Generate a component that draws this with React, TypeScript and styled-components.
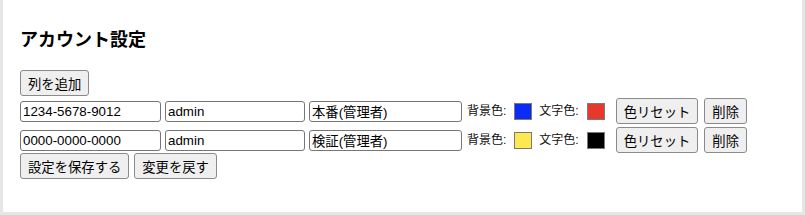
import React from "react";
import styled, { createGlobalStyle } from "styled-components";

type Account = {
  id: string;
  user: string;
  name: string;
  bg: string;
  fg: string;
};

const accounts: Account[] = [
  { id: "1234-5678-9012", user: "admin", name: "本番(管理者)", bg: "#0a2cf5", fg: "#e8382b" },
  { id: "0000-0000-0000", user: "admin", name: "検証(管理者)", bg: "#fde84f", fg: "#000000" },
];

const App: React.FC = () => {
  return (
    <>
      <GlobalStyle />
      <Panel>
        <Title>アカウント設定</Title>
        <Button>列を追加</Button>
        <Rows>
          {accounts.map((a) => (
            <Row key={a.id}>
              <TextInput $width={141} defaultValue={a.id} />
              <TextInput $width={140} defaultValue={a.user} />
              <TextInput $width={153} defaultValue={a.name} />
              <ColorField $offset={1}>
                <Label>背景色:</Label>
                <Swatch $color={a.bg} />
              </ColorField>
              <ColorField $offset={3}>
                <Label>文字色:</Label>
                <Swatch $color={a.fg} />
              </ColorField>
              <Button $offset={7}>色リセット</Button>
              <Button $offset={2}>削除</Button>
            </Row>
          ))}
        </Rows>
        <Actions>
          <Button>設定を保存する</Button>
          <Button>変更を戻す</Button>
        </Actions>
      </Panel>
    </>
  );
};

const GlobalStyle = createGlobalStyle`
  html, body {
    margin: 0;
    padding: 0;
    background: #ffffff;
  }
  body {
    font-family: "Liberation Sans", "Noto Sans CJK JP", sans-serif;
    color: #000;
  }
`;

const Panel = styled.div`
  box-sizing: border-box;
  width: 805px;
  height: 215px;
  border: 3px solid #e6e6e6;
  border-top: none;
  padding: 28px 17px 0 17px;
`;

const Title = styled.h2`
  margin: 0 0 18px 0;
  font-size: 18px;
  line-height: 24px;
  font-weight: 700;
`;

const Button = styled.button<{ $offset?: number }>`
  box-sizing: border-box;
  height: 26px;
  margin: 0 0 0 ${(p) => p.$offset ?? 0}px;
  padding: 0 7px;
  font-family: "Liberation Sans", "Noto Sans CJK JP", sans-serif;
  font-size: 13.33px;
  color: #000;
  background: #efefef;
  border: 1px solid #8a8a8a;
  border-radius: 3px;
  white-space: nowrap;
`;

const Rows = styled.div`
  display: flex;
  flex-direction: column;
  gap: 3px;
  margin-top: 2px;
`;

const Row = styled.div`
  display: flex;
  align-items: center;
  gap: 4px;
`;

const TextInput = styled.input<{ $width: number }>`
  box-sizing: border-box;
  width: ${(p) => p.$width}px;
  height: 21px;
  margin: 0;
  padding: 1px 2px;
  font-family: "Liberation Sans", "Noto Sans CJK JP", sans-serif;
  font-size: 13.33px;
  color: #000;
  border: 1px solid #767676;
  border-radius: 3px;
  outline: none;
`;

const ColorField = styled.span<{ $offset: number }>`
  display: inline-flex;
  align-items: center;
  gap: 8px;
  margin-left: ${(p) => p.$offset}px;
`;

const Label = styled.span`
  font-size: 12px;
  line-height: 16px;
  color: #111;
`;

const Swatch = styled.span<{ $color: string }>`
  box-sizing: border-box;
  display: inline-block;
  width: 18px;
  height: 17px;
  background: ${(p) => p.$color};
  border: 1px solid #7a7a7a;
`;

const Actions = styled.div`
  display: flex;
  gap: 5px;
`;

export default App;
